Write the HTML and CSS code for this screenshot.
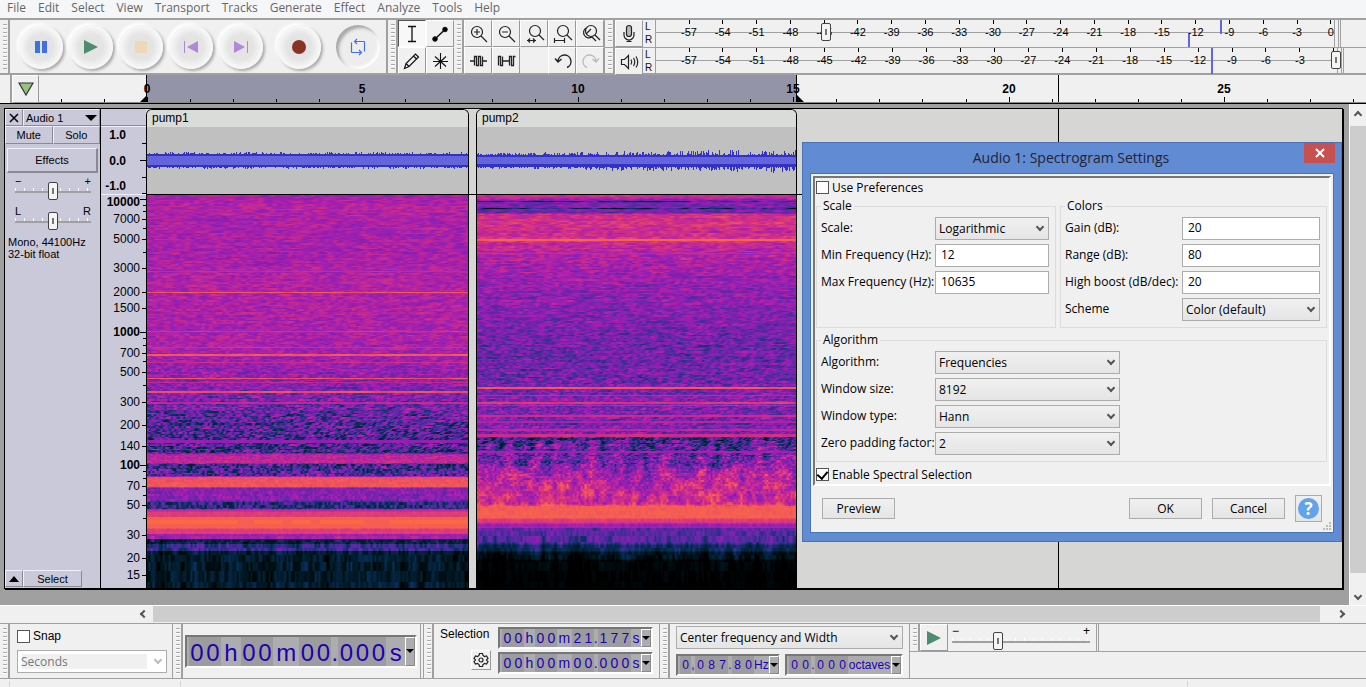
FILE: index.html
```html
<!DOCTYPE html>
<html lang="en">
<head>
<meta charset="UTF-8" />
<meta name="viewport" content="width=device-width, initial-scale=1" />
<title>Audacity</title>
<link rel="stylesheet" href="styles.css">
</head>
<body>

<nav class="menu">
  <a href="#">File</a>
  <a href="#">Edit</a>
  <a href="#">Select</a>
  <a href="#">View</a>
  <a href="#">Transport</a>
  <a href="#">Tracks</a>
  <a href="#">Generate</a>
  <a href="#">Effect</a>
  <a href="#">Analyze</a>
  <a href="#">Tools</a>
  <a href="#">Help</a>
</nav>

<header class="toolbars">
  <div class="grip"></div>
  <div class="transport">
    <button class="round" aria-label="Pause"><svg width="14" height="14"><path d="M1 1h5v12H1zM8 1h5v12H8z" fill="#4070e8"/></svg></button>
    <button class="round" aria-label="Play"><svg width="14" height="14"><path d="M0 0l14 7-14 7z" fill="#4e8c70"/></svg></button>
    <button class="round" aria-label="Stop"><svg width="14" height="14"><path d="M1 1h12v12H1z" fill="#eed9b6"/></svg></button>
    <button class="round" aria-label="Skip to start"><svg width="14" height="14"><path d="M0 1h1v12H0zM14 1v12L3 7z" fill="#b088d8"/></svg></button>
    <button class="round" aria-label="Skip to end"><svg width="14" height="14"><path d="M13 1h1v12h-1zM0 1v12l11-6z" fill="#b088d8"/></svg></button>
    <button class="round record" aria-label="Record"><svg width="14" height="14"><circle cx="7" cy="7" r="7" fill="#893226"/></svg></button>
    <button class="round loop" aria-label="Loop"><svg width="18" height="18" fill="none" stroke="#4070e8" stroke-width="1.2"><path d="M2.500 14.500V4.500M2.500 14.500h9M15.500 3.500V13.500M15.500 3.500H6.500M8 1L5.500 3.500 8 6M10 12l2.500 2.500L10 17"/></svg></button>
  </div>
  <div class="grip"></div>
  <div class="tools">
    <button class="tool pressed" aria-label="Selection tool"><svg width="24" height="24" fill="none" stroke="#111" stroke-width="1.300"><path d="M8 4.500h8M8 19.500h8M12 4.500v15"/></svg></button>
    <button class="tool" aria-label="Envelope tool"><svg width="24" height="24" stroke="#111"><path d="M7 17L17 7.500" stroke-width="1.500"/><circle cx="7" cy="17" r="2.300"/><circle cx="17" cy="7.500" r="2.300"/></svg></button>
    <button class="tool" aria-label="Draw tool"><svg width="24" height="24" fill="none" stroke="#111" stroke-width="1.200"><path d="M4.500 19.500l1.500-5L15.500 5l3 3L9 17.500zM6 14.500l3 3M13.500 7l3 3"/></svg></button>
    <button class="tool" aria-label="Multi-tool"><svg width="24" height="24" fill="none" stroke="#111" stroke-width="1.100"><path d="M12.500 4v16M5 12.500h15M7 7.500l11 10M18 7.500l-11 10"/></svg></button>
  </div>
  <div class="grip"></div>
  <div class="edit">
    <button class="tool" aria-label="Zoom in"><svg width="24" height="24" fill="none" stroke="#222" stroke-width="1.200"><circle cx="11" cy="10" r="5.500"/><path d="M15 14l6 6M8 10h6M11 7v6"/></svg></button>
    <button class="tool" aria-label="Zoom out"><svg width="24" height="24" fill="none" stroke="#222" stroke-width="1.200"><circle cx="11" cy="10" r="5.500"/><path d="M15 14l6 6M8 10h6"/></svg></button>
    <button class="tool" aria-label="Fit selection"><svg width="24" height="24" fill="none" stroke="#222" stroke-width="1.200"><circle cx="13" cy="9" r="5.500"/><path d="M17 13l5 5M5 18.500h9M8 16.500l-2 2 2 2M11 16.500l2 2-2 2"/></svg></button>
    <button class="tool" aria-label="Fit project"><svg width="24" height="24" fill="none" stroke="#222" stroke-width="1.200"><circle cx="13" cy="9" r="5.500"/><path d="M17 13l5 5M4 18.500h10M4.500 16v5M14.500 16v5"/></svg></button>
    <button class="tool" aria-label="Zoom toggle"><svg width="24" height="24" fill="none" stroke="#222" stroke-width="1.200"><circle cx="13" cy="9" r="5.500"/><path d="M17 13l5 5M8 6a5 5 0 1 0 6 9l4 4M8 12l5-5"/></svg></button>
    <button class="tool" aria-label="Trim"><svg width="24" height="24" fill="none" stroke="#222" stroke-width="1.300"><path d="M4 12h4.500M16.500 12H21M8.500 16.500V7.500h2v9h2v-9h2v9h2V7.500"/></svg></button>
    <button class="tool" aria-label="Silence"><svg width="24" height="24" fill="none" stroke="#222" stroke-width="1.300"><path d="M4.500 16.500v-9h2v9h2v-9M8.500 12h7M15.500 16.500v-9h2v9h2v-9h2"/></svg></button>
    <span></span>
    <button class="tool" aria-label="Undo"><svg width="24" height="24" fill="none" stroke="#222" stroke-width="1.400"><path d="M17 18.500a6.500 6.500 0 1 0-9-6.500M5 9.500l3 3.500 3.500-3"/></svg></button>
    <button class="tool" aria-label="Redo" disabled><svg width="24" height="24" fill="none" stroke="#bbb" stroke-width="1.400"><path d="M9 18.500a6.500 6.500 0 1 1 9-6.500M21 9.500l-3 3.500-3.500-3"/></svg></button>
  </div>
  <div class="meters">
    <div class="meter-row">
      <div class="grip"></div>
      <button class="tool" aria-label="Record meter"><svg width="24" height="24" fill="none" stroke="#222" stroke-width="1.200"><rect x="9.500" y="3.500" width="5" height="11" rx="2.500" fill="#bbb"/><path d="M7 10v3a5 5 0 0 0 10 0v-3M12 17.500v2M9.500 19.500h5"/></svg></button>
      <div class="lr"><span>L</span><span>R</span></div>
      <div class="meter" data-peaks="566 0 1,534 1 2">
        <input type="range" class="volume" aria-label="Recording volume" min="0" max="200" value="49">
      </div>
      <div class="edge wide"></div>
    </div>
    <div class="meter-row">
      <div class="grip"></div>
      <button class="tool" aria-label="Playback meter"><svg width="24" height="24" fill="none" stroke="#222" stroke-width="1.200"><path d="M4.500 9.500h3l4-4v13l-4-4h-3zM14 9.500q1.500 2.500 0 5M16.500 8q2.500 4 0 8M19 6.500q3.500 5.500 0 11"/></svg></button>
      <div class="lr"><span>L</span><span>R</span></div>
      <div class="meter" data-peaks="554 0 2">
        <input type="range" class="volume" aria-label="Playback volume" min="0" max="200" value="200">
      </div>
      <div class="edge"></div>
    </div>
  </div>
</header>

<div class="timeline">
  <div class="timeline-grip"></div>
  <button class="pin" aria-label="Pinned play head"><svg width="16" height="14"><path d="M1 1h14L8 13z" fill="#98c080" stroke="#333" stroke-width="1.200"/></svg></button>
  <svg class="time-ruler" id="time-ruler" height="28"></svg>
</div>

<main class="workspace">
  <section class="tracks">
    <div class="track">
      <div class="panel">
        <div class="row">
          <button class="flat close" aria-label="Close track"><svg width="10" height="10" stroke="#000" stroke-width="1.500"><path d="M1 1l8 8M9 1L1 9"/></svg></button>
          <button class="flat name">Audio 1<i class="down big"></i></button>
        </div>
        <div class="row mute">
          <button class="flat">Mute</button>
          <button class="flat">Solo</button>
        </div>
        <button class="flat effects">Effects</button>
        <div class="slider"><span>−</span><span>+</span><input type="range" aria-label="Gain" value="50"></div>
        <div class="slider"><span>L</span><span>R</span><input type="range" aria-label="Pan" value="50"></div>
        <p class="info">Mono, 44100Hz<br>32-bit float</p>
        <div class="row foot">
          <button class="flat close" aria-label="Collapse"><i class="up"></i></button>
          <button class="flat select-btn">Select</button>
        </div>
      </div>
      <svg class="scale" id="scale" width="45" height="479"></svg>
      <div class="clips">
        <article class="clip"><h2>pump1</h2><canvas class="wave" width="321" height="67"></canvas><canvas class="spectro" width="321" height="393"></canvas></article>
        <article class="clip"><h2>pump2</h2><canvas class="wave" width="319" height="67"></canvas><canvas class="spectro" width="319" height="393"></canvas></article>
        <i class="cursor"></i>
      </div>
    </div>
  </section>
  <div class="vscroll"><i class="chev n"></i><div class="thumb"></div><i class="chev s"></i></div>
</main>

<div class="hscroll"><i class="chev w"></i><div class="thumb"></div><i class="chev e"></i></div>

<footer class="bottom">
  <div class="grip"></div>
  <div class="snap">
    <label class="check"><input type="checkbox">Snap</label>
    <div class="select off"><select aria-label="Snap to" disabled><option>Seconds</option></select></div>
  </div>
  <div class="grip"></div>
  <div class="position"><div class="time large" data-time="00 h 00 m 00.000 s"></div></div>
  <div class="grip"></div>
  <div class="selection">
    <div class="sel-head">
      <span>Selection</span>
      <button class="gear" aria-label="Selection options"><svg width="16" height="16" fill="none" stroke="#222" stroke-width="1.200"><path d="M6.500 1.500h3l.5 2 1.500 1 2-.6 1.500 2.600L13.500 8l1.500 1.500-1.500 2.600-2-.6-1.500 1-.5 2h-3l-.5-2-1.500-1-2 .6L1 9.500 2.500 8 1 6.500l1.500-2.600 2 .6 1.500-1z"/><circle cx="8" cy="8" r="2"/></svg></button>
    </div>
    <div class="sel-times">
      <div class="time" data-time="00 h 00 m 21.177 s"></div>
      <div class="time" data-time="00 h 00 m 00.000 s"></div>
    </div>
  </div>
  <div class="grip"></div>
  <div class="spectral">
    <div class="select"><select aria-label="Spectral selection"><option>Center frequency and Width</option></select></div>
    <div class="row">
      <div class="time freq" data-time="0,087.80 Hz"></div>
      <div class="time freq" data-time="00.000 octaves"></div>
    </div>
  </div>
  <div class="play-speed">
    <div class="speed-row">
      <div class="grip"></div>
      <button class="tool" aria-label="Play at speed"><svg width="24" height="24"><path d="M5 5l14 7-14 7z" fill="#4e8c70"/></svg></button>
      <div class="slider speed"><span>−</span><span>+</span><input type="range" aria-label="Playback speed" value="32"></div>
      <div class="edge"></div>
    </div>
  </div>
</footer>

<div class="status"><span></span><span></span><span></span><span></span></div>

<form class="dialog">
  <header>
    <h1>Audio 1: Spectrogram Settings</h1>
    <button type="button" class="x" aria-label="Close"><svg width="10" height="10" stroke="#fff" stroke-width="2"><path d="M1 1l8 8M9 1L1 9"/></svg></button>
  </header>
  <div class="content">
    <div class="inset">
      <label class="check"><input type="checkbox">Use Preferences</label>
      <div class="groups">
        <fieldset class="g-scale">
          <legend>Scale</legend>
          <label for="scale-type">Scale:</label>
          <div class="select"><select id="scale-type"><option>Logarithmic</option></select></div>
          <label for="min-freq">Min Frequency (Hz):</label>
          <input type="text" id="min-freq" value="12">
          <label for="max-freq">Max Frequency (Hz):</label>
          <input type="text" id="max-freq" value="10635">
        </fieldset>
        <fieldset class="g-colors">
          <legend>Colors</legend>
          <label for="gain">Gain (dB):</label>
          <input type="text" id="gain" value="20">
          <label for="range">Range (dB):</label>
          <input type="text" id="range" value="80">
          <label for="boost">High boost (dB/dec):</label>
          <input type="text" id="boost" value="20">
          <label for="scheme">Scheme</label>
          <div class="select"><select id="scheme"><option>Color (default)</option></select></div>
        </fieldset>
      </div>
      <fieldset class="g-algo">
        <legend>Algorithm</legend>
        <label for="algo">Algorithm:</label>
        <div class="select"><select id="algo"><option>Frequencies</option></select></div>
        <label for="win-size">Window size:</label>
        <div class="select"><select id="win-size"><option>8192</option></select></div>
        <label for="win-type">Window type:</label>
        <div class="select"><select id="win-type"><option>Hann</option></select></div>
        <label for="padding">Zero padding factor:</label>
        <div class="select"><select id="padding"><option>2</option></select></div>
      </fieldset>
      <label class="check"><input type="checkbox" checked>Enable Spectral Selection</label>
    </div>
    <div class="actions">
      <button type="button">Preview</button>
      <button type="button" class="ok">OK</button>
      <button type="button">Cancel</button>
      <button type="button" class="help" aria-label="Help"><b>?</b></button>
    </div>
    <svg class="resize" width="8" height="8" fill="#bbb"><path d="M6 0h2v2H6zM3 3h2v2H3zM6 3h2v2H6zM0 6h2v2H0zM3 6h2v2H3zM6 6h2v2H6z"/></svg>
  </div>
</form>

<script src="app.js"></script>
</body>
</html>
```
FILE: styles.css
```css
:root {
  --face: #f0f0f0;
  --line: #a0a0a0;
  --track: #c9c9d9;
  --blue: #1c00b4;
  --ui: "Open Sans", "Noto Sans", sans-serif;
  --plain: "Liberation Sans", Arial, sans-serif;
}

* {
  box-sizing: border-box;
}

body {
  margin: 0;
  height: 100vh;
  overflow: hidden;
  position: relative;
  display: flex;
  flex-direction: column;
  background: var(--face);
  font-family: var(--plain);
  font-size: 12px;
  color: #000;
}

button, input, select {
  font: inherit;
  color: inherit;
  margin: 0;
  padding: 0;
}

svg, canvas {
  display: block;
}

/* menu */
.menu {
  flex: none;
  display: flex;
  gap: 12px;
  height: 18px;
  padding-left: 7px;
  background: #f4f6f8;
  font: 12px/16px var(--ui);
}

.menu a {
  color: #666;
  text-decoration: none;
}

/* toolbars */
.toolbars {
  flex: none;
  display: flex;
  height: 57px;
  border-top: 2px solid var(--line);
  border-bottom: 2px solid var(--line);
}

.grip {
  flex: none;
  width: 10px;
  border-right: 2px solid var(--line);
  background: repeating-linear-gradient(#a8a8a8 0 1px, #fff 1px 2px, var(--face) 2px 4px) 3px 4px / 4px calc(100% - 8px) no-repeat;
}

.transport {
  display: flex;
  align-items: center;
  width: 378px;
  padding-left: 9px;
  gap: 6px;
  border-right: 2px solid var(--line);
}

.round {
  width: 44px;
  height: 44px;
  border: 0;
  border-radius: 50%;
  display: grid;
  place-items: center;
  background: radial-gradient(#e4e4e4 40%, #f6f6f6 65%);
  box-shadow: 2px 2px 3px #aaa, -2px -2px 3px #fff;
}

.record {
  margin-left: 8px;
}

.loop {
  margin-left: 9px;
  background: #ededed;
  box-shadow: inset 3px 3px 3px #aaa, inset -2px -2px 3px #fff;
}

.tools, .edit {
  display: grid;
  grid-template-columns: repeat(2, 28px);
  grid-auto-rows: 27px;
}

.edit {
  grid-template-columns: repeat(5, 28px);
}

.tool {
  flex: none;
  width: 28px;
  height: 27px;
  display: grid;
  place-items: center;
  background: var(--face);
  border: 1px solid;
  border-color: #fff #999 #999 #fff;
}

.pressed {
  background: #f8f8f8;
  border-color: #555 #fff #fff #555;
}

.meters {
  flex: 1;
  border-left: 1px solid var(--line);
}

.meter-row {
  display: flex;
  height: 27px;
}

.meter-row + .meter-row {
  border-top: 1px solid var(--line);
}

.lr {
  width: 12px;
  padding-left: 2px;
  display: flex;
  flex-direction: column;
  font-size: 10px;
  line-height: 13px;
  color: #112;
}

.meter {
  position: relative;
  flex: 1;
  display: flex;
  justify-content: space-between;
  padding: 0 3px 0 33px;
  border-left: 1px solid var(--line);
  border-right: 1px solid var(--line);
  font-size: 11px;
  line-height: 16px;
  background: linear-gradient(var(--line), var(--line)) 0 12px / 100% 1px no-repeat;
}

.meter span {
  width: 0;
  display: flex;
  flex-direction: column;
  align-items: center;
}

.meter span::before {
  content: "";
  width: 1px;
  height: 4px;
  flex: none;
  background: #000;
}

.meter .peak {
  position: absolute;
  width: 2px;
  background: #6464dc;
}

.volume {
  position: absolute;
  left: 0;
  top: 3px;
  width: calc(100% + 4px);
  height: 18px;
  background: none;
}

.edge {
  width: 25px;
  margin-left: 3px;
  border-left: 3px double var(--line);
}

.edge.wide {
  width: 28px;
}

/* time ruler */
.timeline {
  flex: none;
  display: flex;
  height: 29px;
  border-bottom: 1px solid #000;
}

.timeline-grip {
  width: 12px;
  border-right: 2px solid var(--line);
}

.pin {
  width: 27px;
  display: grid;
  place-items: center;
  background: var(--face);
  border: 1px solid;
  border-color: #fff #999 #999 #fff;
}

.time-ruler {
  flex: 1;
  font-weight: bold;
}

/* tracks */
.workspace {
  flex: 1;
  min-height: 0;
  display: flex;
  background: var(--line);
}

.tracks {
  flex: 1;
  padding: 4px 6px 0 4px;
}

.track {
  display: flex;
  border: 1px solid #000;
  box-shadow: 1px 1px #000;
  background: #d6d6d4;
}

.panel {
  width: 96px;
  display: flex;
  flex-direction: column;
  background: var(--track);
  border-right: 1px solid #000;
  font-size: 11px;
}

.row {
  display: flex;
}

.flat {
  height: 17px;
  border: 1px solid;
  border-color: #eef #8a8a94 #8a8a94 #eef;
  background: var(--track);
  display: flex;
  align-items: center;
  justify-content: center;
}

.close {
  width: 18px;
}

.name {
  flex: 1;
  justify-content: space-between;
  padding: 0 2px;
}

.mute .flat {
  flex: 1;
  height: 18px;
}

.effects {
  margin: 4px 2px 0;
  height: 25px;
  border-width: 1px 2px 2px 1px;
}

.slider {
  display: grid;
  grid-template-columns: 1fr 1fr;
  width: 76px;
  height: 26px;
  margin: 4px 0 0 10px;
  line-height: 8px;
}

.slider span {
  grid-row: 1;
  grid-column: 1;
}

.slider span + span {
  grid-column: 2;
  text-align: right;
}

.slider input {
  grid-row: 1;
  grid-column: 1 / 3;
  width: 100%;
  height: 18px;
  margin-top: 5px;
}

input[type="range"] {
  appearance: none;
  background:
    linear-gradient(#a0a0a0, #a0a0a0) 0 9px / 100% 2px no-repeat,
    repeating-linear-gradient(90deg, #fff 0 1px, transparent 1px 9px) 0 6px / 100% 3px no-repeat;
}

input[type="range"].volume {
  background: none;
}

input[type="range"]::-webkit-slider-thumb {
  appearance: none;
  width: 10px;
  height: 18px;
  border: 1px solid #444;
  border-radius: 2px;
  background: linear-gradient(#777, #777) 3px 5px / 2px 6px no-repeat, #f4f4f4;
}

.info {
  margin: 3px;
  line-height: 12px;
}

.foot {
  margin-top: auto;
  padding-bottom: 1px;
}

.select-btn {
  width: 59px;
}

.up {
  border: 5px solid transparent;
  border-top: 0;
  border-bottom: 6px solid #000;
}

.down {
  border: 4px solid transparent;
  border-bottom: 0;
  border-top: 4px solid #000;
}

.big {
  border-width: 6px 6px 0;
}

.scale {
  background: var(--track);
}

.clips {
  flex: 1;
  position: relative;
  display: flex;
  gap: 7px;
  background: linear-gradient(#000, #000) 0 85px / 100% 1px no-repeat;
}

.clip {
  border: 1px solid #000;
  border-bottom: 0;
  border-radius: 6px 6px 0 0;
  overflow: hidden;
}

.clip h2 {
  margin: 0;
  padding-left: 5px;
  height: 17px;
  font-size: 12px;
  font-weight: normal;
  line-height: 17px;
  background: #dadcda;
}

.wave {
  background: #c0c0c0;
  border-bottom: 1px solid #000;
}

.cursor {
  position: absolute;
  left: 912px;
  top: 0;
  width: 1px;
  height: 100%;
  background: #000;
}

/* scroll bars */
.vscroll, .hscroll {
  display: flex;
  align-items: center;
  background: var(--face);
}

.vscroll {
  width: 17px;
  flex-direction: column;
  padding: 8px 0 6px;
  gap: 8px;
  border-left: 1px solid #fff;
}

.hscroll {
  flex: none;
  height: 18px;
  border-top: 1px solid #fff;
  border-bottom: 1px solid var(--face);
  padding: 0 22px 0 141px;
  gap: 6px;
}

.thumb {
  flex: 1;
  align-self: stretch;
  background: #cdcdcd;
}

.vscroll .thumb {
  margin-bottom: 12px;
}

.hscroll .thumb {
  margin-right: 12px;
}

.chev {
  width: 6px;
  height: 6px;
  border: solid #555;
  border-width: 2px 2px 0 0;
}

.n { transform: rotate(-45deg); }
.e { transform: rotate(45deg); }
.s { transform: rotate(135deg); }
.w { transform: rotate(-135deg); }

/* bottom toolbars */
.bottom {
  flex: none;
  display: flex;
  height: 56px;
  border-top: 1px solid var(--line);
  border-bottom: 1px solid var(--line);
}

.snap {
  width: 163px;
  padding: 5px 5px 0 7px;
  border-right: 1px solid var(--line);
}

.snap .select {
  margin-top: 7px;
}

.check {
  display: flex;
  align-items: center;
  gap: 3px;
  height: 14px;
}

input[type="checkbox"] {
  appearance: none;
  width: 13px;
  height: 13px;
  border: 1px solid #555;
  background: #fff;
  display: grid;
  place-items: center;
}

input[type="checkbox"]:checked::before {
  content: "";
  width: 5px;
  height: 8px;
  border: solid #000;
  border-width: 0 2px 2px 0;
  transform: rotate(40deg);
}

.select {
  position: relative;
  font-family: var(--ui);
}

.select select {
  appearance: none;
  display: block;
  width: 100%;
  height: 23px;
  padding-left: 3px;
  border: 1px solid #acacac;
  border-radius: 0;
  background: linear-gradient(#f0f0f0, #e5e5e5);
}

.select::after {
  content: "";
  position: absolute;
  right: 6px;
  top: 7px;
  width: 6px;
  height: 6px;
  border: solid #555;
  border-width: 0 2px 2px 0;
  box-sizing: border-box;
  transform: rotate(45deg);
}

.select .off select,
.off select {
  color: #777;
  opacity: 1;
  background: linear-gradient(#f0f0f0, #f0f0f0) 4px 3px / 125px 15px no-repeat, #fff;
}

.off::after {
  border-color: #bbb;
}

.position {
  display: flex;
  align-items: center;
  width: 241px;
  padding-left: 2px;
  border-right: 4px double var(--line);
}

.time {
  display: flex;
  width: 155px;
  height: 22px;
  padding-left: 2px;
  border: 2px solid;
  border-color: #777 #fff #fff #777;
  background: #adadb0;
  color: var(--blue);
  font-size: 14px;
  line-height: 19px;
}

.time b {
  flex: none;
  width: 11px;
  font-weight: normal;
  text-align: center;
  background: #9c9c9e;
}

.time span {
  flex: 1 1 auto;
  text-align: center;
}

.time .point {
  flex: none;
  width: 4px;
}

.time button {
  flex: none;
  width: 10px;
  border: 1px solid;
  border-color: #fff #888 #888 #fff;
  background: #adadb0;
  display: grid;
  place-items: center;
}

.large {
  width: 232px;
  height: 33px;
  font-size: 24px;
  line-height: 31px;
}

.large b {
  width: 16px;
}

.large .point {
  width: 7px;
}

.selection {
  display: flex;
  gap: 7px;
  width: 226px;
  padding: 3px 3px 3px 6px;
  border-right: 1px solid var(--line);
}

.sel-head {
  width: 51px;
  display: flex;
  flex-direction: column;
  gap: 9px;
}

.gear {
  align-self: flex-end;
  width: 20px;
  height: 20px;
  display: grid;
  place-items: center;
  background: var(--face);
  border: 1px solid;
  border-color: #fff #999 #999 #fff;
}

.sel-times {
  display: flex;
  flex-direction: column;
  gap: 3px;
}

.spectral {
  width: 240px;
  padding: 2px 6px;
  border-right: 1px solid var(--line);
}

.spectral .row {
  margin-top: 5px;
  justify-content: space-between;
}

.freq {
  width: 104px;
}

.freq + .freq {
  width: 118px;
}

.freq {
  font-size: 12px;
}

.play-speed {
  flex: 1;
}

.speed-row {
  display: flex;
  height: 28px;
  border-bottom: 1px solid var(--line);
}

.speed {
  width: 138px;
  height: 24px;
  margin: 3px 6px 0 4px;
}

.speed-row .edge {
  margin: 0;
}

.status {
  flex: none;
  height: 8px;
  display: flex;
  padding-top: 2px;
}

.status span {
  border-left: 1px solid #d4d4d4;
  flex: 1;
}

.status span:nth-child(1) { flex: 0 0 9px; border: 0; }
.status span:nth-child(2) { flex: 0 0 171px; }
.status span:nth-child(4) { flex: 0 0 179px; }

/* spectrogram settings window */
.dialog {
  position: absolute;
  left: 802px;
  top: 142px;
  width: 540px;
  padding: 0 7px 8px;
  border: 1px solid #4a73b4;
  background: #618bd3;
  font-family: var(--ui);
}

.dialog header {
  display: flex;
  height: 30px;
}

.dialog h1 {
  flex: 1;
  margin: 0;
  padding-left: 28px;
  font-size: 14px;
  font-weight: normal;
  line-height: 30px;
  text-align: center;
  color: #223;
}

.x {
  width: 31px;
  height: 20px;
  margin-right: -1px;
  border: 0;
  background: #c75050;
  display: grid;
  place-items: center;
}

.content {
  position: relative;
  border: 1px solid #4a73b4;
  background: var(--face);
  padding: 2px 2px 10px;
}

.inset {
  border: 2px solid;
  border-color: #777 #fff #fff #777;
  padding: 2px 2px 3px 1px;
}

.groups {
  display: flex;
  gap: 4px;
  margin-top: 5px;
}

fieldset {
  position: relative;
  display: grid;
  grid-template-columns: 114px 1fr;
  grid-auto-rows: 23px;
  gap: 4px 0;
  align-content: start;
  margin: 0;
  padding: 6px 6px 0 4px;
  border: 1px solid #dcdcdc;
}

legend {
  margin-bottom: -2px;
  padding: 0 2px;
  height: 14px;
  line-height: 14px;
}

fieldset label {
  line-height: 22px;
  white-space: nowrap;
}

fieldset input {
  width: 100%;
  height: 23px;
  padding: 0 5px 3px;
  border: 1px solid #acacac;
  background: #fff;
}

.g-scale {
  width: 240px;
  height: 129px;
}

.g-colors {
  flex: 1;
  grid-template-columns: 117px 1fr;
}

.g-algo {
  grid-template-columns: 114px 185px;
  height: 129px;
  margin: 5px 0;
}

.actions {
  display: flex;
  align-items: center;
  gap: 10px;
  margin-top: 9px;
  padding: 0 9px;
}

.actions button {
  width: 73px;
  height: 21px;
  border: 1px solid #acacac;
  background: linear-gradient(#f0f0f0, #e5e5e5);
}

.actions .ok {
  margin-left: auto;
}

.actions .help {
  width: 27px;
  height: 27px;
  display: grid;
  place-items: center;
}

.help b {
  width: 21px;
  height: 21px;
  border-radius: 50%;
  background: #62a3ea;
  color: #fff;
  font-size: 17px;
  line-height: 21px;
}

.resize {
  position: absolute;
  right: 2px;
  bottom: 2px;
}
```
FILE: app.js
```javascript
const PX_PER_SECOND = 43.08;
const MIN_HZ = 12;
const MAX_HZ = 10635;
const SPEC_HEIGHT = 393;

// dB scales
document.querySelectorAll('.meter').forEach(meter => {
  const volume = meter.querySelector('.volume');
  for (let db = -57; db <= 0; db += 3) {
    const label = document.createElement('span');
    label.textContent = db;
    meter.insertBefore(label, volume);
  }
  meter.dataset.peaks.split(',').forEach(p => {
    const [x, from, to] = p.split(' ').map(Number);
    const bar = document.createElement('i');
    bar.className = 'peak';
    bar.style.left = (x / 680 * 100).toFixed(2) + '%';
    bar.style.top = from * 50 + '%';
    bar.style.height = (to - from) * 50 + '%';
    meter.appendChild(bar);
  });
});

// time ruler, zero sits above the first clip
const ruler = document.getElementById('time-ruler');
const zero = 108;
let marks = `<rect x="${zero - 1}" width="651" height="27" fill="#9494a9"/>
  <path d="M${zero - 0.5} 0v28M${zero + 649.5} 0v28M1019.5 0v28" stroke="#000"/>
  <path d="M${zero - 7} 27l7-7v7zM${zero + 650} 20l7 7h-7z"/>
  <path d="M0 27.5h2000" stroke="#888"/>`;
for (let s = -2; s < 29; s++) {
  const x = Math.round(zero + s * PX_PER_SECOND);
  const major = s >= 0 && s % 5 === 0;
  marks += `<path d="M${x}.5 ${major ? 22 : 24}v${major ? 5 : 3}" stroke="#000"/>`;
  if (major) marks += `<text x="${x}" y="18" text-anchor="middle">${s}</text>`;
}
ruler.innerHTML = marks;

// amplitude and frequency scale
const freqY = hz => 86 + SPEC_HEIGHT * Math.log(MAX_HZ / hz) / Math.log(MAX_HZ / MIN_HZ);
const named = [10000, 7000, 5000, 3000, 2000, 1500, 1000, 700, 500, 300, 200, 140, 100, 70, 50, 30, 20, 15];
const decades = [10000, 1000, 100];
let scale = '<path d="M0 17.500h45M0 85.500h45" stroke="#eef"/><path d="M0 16.500h45" stroke="#8a8a94"/>';
[['1.0', 30], ['0.0', 56], ['-1.0', 81]].forEach(([t, y]) => {
  scale += `<text x="25" y="${y}" text-anchor="end" font-weight="bold">${t}</text>`;
});
scale += '<path d="M41 34.500h4M39 51.500h6M41 68.500h4M41 84.500h4" stroke="#000"/>';
named.forEach(hz => {
  const y = Math.round(freqY(hz));
  const bold = decades.includes(hz);
  const textY = Math.max(y + 4, 97);
  scale += `<text x="39" y="${textY}" text-anchor="end"${bold ? ' font-weight="bold"' : ''}>${hz}</text>
    <path d="M${bold ? 39 : 41} ${y}.5H45" stroke="#000"/>`;
});
[9000, 8000, 6000, 4000, 900, 800, 600, 400, 90, 80, 60, 40].forEach(hz => {
  scale += `<path d="M42 ${Math.round(freqY(hz))}.5h3" stroke="#000"/>`;
});
document.getElementById('scale').innerHTML = scale;

// time fields: digits get a darker cell
document.querySelectorAll('.time').forEach(field => {
  field.innerHTML = field.dataset.time.match(/\d|[^\d]+/g).map(t => {
    if (/\d/.test(t)) return `<b>${t}</b>`;
    return `<span${/[.,]/.test(t) ? ' class="point"' : ''}>${t.trim()}</span>`;
  }).join('') + '<button aria-label="Format"><i class="down"></i></button>';
});

// repeatable noise
function hash(x, y, seed) {
  let h = Math.imul(x, 374761393) ^ Math.imul(y, 668265263) ^ Math.imul(seed, 974711);
  h = Math.imul(h ^ (h >>> 13), 1274126177);
  h = Math.imul(h ^ (h >>> 15), 2246822519);
  return ((h ^ (h >>> 16)) >>> 0) / 4294967296;
}

function noise(x, row, seed) {
  const i = Math.floor(x);
  const f = x - i;
  return (hash(i, row, seed) * (1 - f) + hash(i + 1, row, seed) * f) * 2 - 1;
}

function noise2(x, y, seed) {
  const j = Math.floor(y);
  const f = y - j;
  return noise(x, j, seed) * (1 - f) + noise(x, j + 1, seed) * f;
}

const palette = [
  [0, 0, 0, 0], [.12, 0, 24, 34], [.26, 8, 46, 92], [.38, 72, 44, 156], [.5, 134, 32, 178],
  [.58, 168, 32, 172], [.7, 212, 48, 132], [.84, 244, 92, 84], [1, 255, 124, 40]
];

function colour(v) {
  v = Math.min(.999, Math.max(0, v));
  const n = palette.findIndex(p => p[0] > v);
  const a = palette[n - 1], b = palette[n];
  const f = (v - a[0]) / (b[0] - a[0]);
  return [1, 2, 3].map(k => a[k] + (b[k] - a[k]) * f);
}

// [y, level, grain] going down from the top of the spectrogram
const clips = [
  {
    profile: [[0, .57, .08], [12, .62, .08], [22, .58, .08], [60, .58, .08], [95, .6, .08], [155, .58, .09], [185, .53, .12],
      [205, .47, .16], [225, .4, .2], [250, .36, .22], [257, .36, .2], [259, .61, .08], [267, .65, .06], [269, .36, .2], [280, .4, .18],
      [282, .8, .03], [291, .82, .03], [293, .5, .08], [304, .5, .09], [307, .34, .14], [313, .34, .14], [314, .6, .03], [317, .74, .02], [321, .74, .02],
      [322, .86, .03], [332, .86, .03], [334, .74, .02], [338, .74, .02], [339, .56, .04], [343, .56, .04], [344, .18, .1],
      [348, .18, .12], [349, .32, .09], [355, .32, .09], [356, .12, .1], [393, .11, .09]],
    lines: [[76, .67, 1], [97, .82, 1], [136, .71, 1], [152, .68, 1], [159, .82, 2], [167, .68, 1], [183, .8, 1], [187, .64, 1], [196, .8, 2], [207, .64, 2], [245, .54, 3]],
    grainy: 0
  },
  {
    profile: [[0, .66, .07], [3, .62, .08], [5, .48, .1], [17, .44, .1], [19, .68, .08], [28, .71, .08], [36, .66, .09], [46, .71, .08], [48, .64, .09],
      [62, .6, .1], [85, .54, .1], [115, .5, .1], [150, .45, .12], [185, .46, .13], [205, .5, .13], [215, .48, .14], [238, .48, .14], [243, .36, .2], [255, .42, .18],
      [268, .48, .16], [278, .6, .13], [295, .66, .1], [308, .68, .1], [311, .84, .03], [322, .85, .03], [324, .74, .03], [327, .72, .03],
      [329, .56, .05], [332, .56, .05], [333, .42, .08], [347, .4, .08], [350, .26, .06], [355, .25, .06], [357, .12, .08], [363, .1, .08], [365, .02, .06], [393, .0, .03]],
    lines: [[44, .87, 2], [58, .66, 1], [192, .82, 2], [200, .64, 1], [207, .72, 2], [210, .64, 1], [220, .66, 2], [226, .6, 2], [234, .62, 2], [239, .68, 3], [256, .57, 2]],
    grainy: 1
  }
];

function levelAt(profile, y) {
  const n = Math.max(1, profile.findIndex(p => p[0] >= y));
  const a = profile[n - 1], b = profile[n];
  const f = (y - a[0]) / (b[0] - a[0]);
  return [a[1] + (b[1] - a[1]) * f, a[2] + (b[2] - a[2]) * f];
}

document.querySelectorAll('.spectro').forEach((canvas, c) => {
  const ctx = canvas.getContext('2d');
  const { width, height } = canvas;
  const img = ctx.createImageData(width, height);
  const clip = clips[c];
  const binAt = y => Math.floor(MAX_HZ * Math.exp(-y / height * Math.log(MAX_HZ / MIN_HZ)) / 2.69);
  for (let y = 0; y < height; y++) {
    const [base, grain] = levelAt(clip.profile, y);
    // above 260 rows are thinner than a pixel pair, below that one row per bin
    const bin = y < 260 ? 9000 + Math.floor(y / 1.5) : binAt(y);
    const step = y > 260 ? 2 : 2 + 3 * (1 - y / 260);
    const line = clip.lines.find(l => y >= l[0] && y < l[0] + l[2]);
    for (let x = 0; x < width; x++) {
      let v = base + grain * (noise(x / step, bin, c + 1) + .4 * noise(x / (step * 4), bin, c + 5) + .15 * (hash(0, bin, c + 9) * 2 - 1));
      // slow vertical streaks where the bins are wide
      if (y > 340) v += .08 * noise(x / 6, c, 31) * (y > 364 && c ? .3 : 1);
      if (clip.grainy && y > 240 && y < 311) v += .15 * noise2(x / 6, y / 10, 17);
      if (clip.grainy && (y === 6 || y === 13)) v -= .18 + .22 * noise(x / 9, y, 3);
      if (line) v = line[1] + .04 * noise(x / 10, line[0], c + 2);
      if (c === 0 && y > 322 && y < 332) v = y > 324 && y < 329 && noise(x / 14, 1, 4) > -.2 ? .91 : .85;
      const rgb = colour(v);
      const i = (y * width + x) * 4;
      img.data[i] = rgb[0];
      img.data[i + 1] = rgb[1];
      img.data[i + 2] = rgb[2];
      img.data[i + 3] = 255;
    }
  }
  ctx.putImageData(img, 0, 0);
});

document.querySelectorAll('.wave').forEach((canvas, c) => {
  const ctx = canvas.getContext('2d');
  for (let x = 0; x < canvas.width; x++) {
    const swell = c ? 1 + 2 * x / canvas.width : 1;
    const up = (c ? 5 : 6) + Math.round(Math.pow(hash(x, 1, c + 3), 3) * 2 * swell);
    const down = 6 + Math.round(Math.pow(hash(x, 2, c + 3), 3) * 2 * swell);
    ctx.fillStyle = '#3232c8';
    ctx.fillRect(x, 33 - up, 1, up + down + 1);
    ctx.fillStyle = '#6464dc';
    ctx.fillRect(x, c ? 30 : 29, 1, c ? 7 : 9);
  }
});
```
